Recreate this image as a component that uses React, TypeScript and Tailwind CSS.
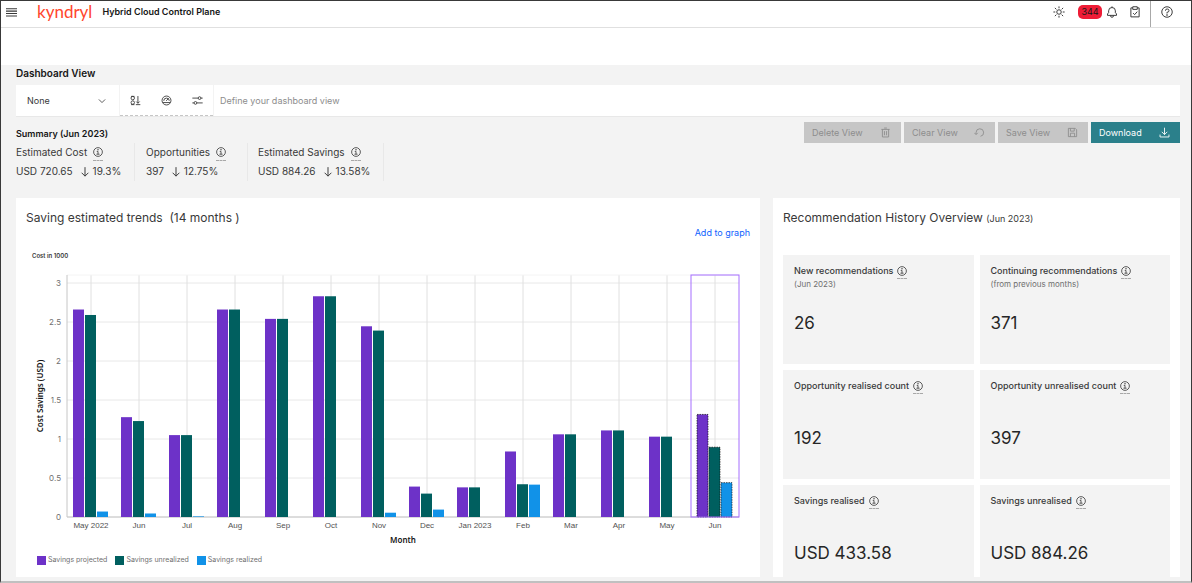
import type { ReactNode } from "react";

type IconProps = { className?: string; children: ReactNode };

// All icons share a 32-unit grid and inherit the text colour.
function Icon({ className = "size-[11px]", children }: IconProps) {
  return (
    <svg
      viewBox="0 0 32 32"
      className={className}
      fill="none"
      stroke="currentColor"
      strokeWidth="2.6"
      aria-hidden="true"
    >
      {children}
    </svg>
  );
}

function TrashIcon() {
  return (
    <Icon>
      <path d="M4 7h24M7 7v22h18V7M12 3h8M13 12v12M19 12v12" />
    </Icon>
  );
}

function ResetIcon() {
  return (
    <Icon>
      <path d="M19 27a11 11 0 1 0-13-11v5M1 17l5 5 5-5" />
    </Icon>
  );
}

function SaveIcon() {
  return (
    <Icon>
      <path d="M4 4h20l4 4v20H4zM10 4v8h11V4M10 28V18h12v10" />
    </Icon>
  );
}

function DownloadIcon() {
  return (
    <Icon>
      <path d="M16 2v20M8 14l8 8 8-8M3 22v7h26v-7" />
    </Icon>
  );
}

function DownArrow() {
  return (
    <Icon className="size-3 shrink-0">
      <path d="M16 3v24M7 18l9 9 9-9" />
    </Icon>
  );
}

// Info glyph with the dashed underline that marks it as having a tooltip.
function Info({ label }: { label: string }) {
  return (
    <button
      type="button"
      aria-label={`About ${label}`}
      className="flex h-4 shrink-0 items-center border-b border-dashed border-[#a8a8a8]"
    >
      <Icon className="size-[10px]">
        <circle cx="16" cy="16" r="14" />
        <path d="M12 14h4v9M11 23h10" />
        <circle cx="16" cy="9" r="1" fill="currentColor" />
      </Icon>
    </button>
  );
}

const summary = [
  { label: "Estimated Cost", value: "USD 720.65", change: "19.3%", box: "w-[119px]" },
  { label: "Opportunities", value: "397", change: "12.75%", box: "w-[113px] pl-[11px]" },
  { label: "Estimated Savings", value: "USD 884.26", change: "13.58%", box: "w-[136px] pl-[10px]" },
];

const actions = [
  { label: "Delete View", icon: <TrashIcon />, width: "w-[97px]" },
  { label: "Clear View", icon: <ResetIcon />, width: "w-[91px]" },
  { label: "Save View", icon: <SaveIcon />, width: "w-[90px]" },
];

const tiles = [
  { label: "New recommendations", note: "(Jun 2023)", value: "26" },
  { label: "Continuing recommendations", note: "(from previous months)", value: "371" },
  { label: "Opportunity realised count", note: "", value: "192" },
  { label: "Opportunity unrealised count", note: "", value: "397" },
  { label: "Savings realised", note: "", value: "USD 433.58" },
  { label: "Savings unrealised", note: "", value: "USD 884.26" },
];

const series = [
  { label: "Savings projected", color: "#6d32c8", swatch: "bg-[#6d32c8]" },
  { label: "Savings unrealized", color: "#005f5f", swatch: "bg-[#005f5f]" },
  { label: "Savings realized", color: "#1192e8", swatch: "bg-[#1192e8]" },
];

// [month, projected, unrealized, realized], in thousands
const months: [string, number, number, number][] = [
  ["May 2022", 2.66, 2.59, 0.07],
  ["Jun", 1.28, 1.23, 0.045],
  ["Jul", 1.05, 1.05, 0.008],
  ["Aug", 2.66, 2.66, 0],
  ["Sep", 2.54, 2.54, 0],
  ["Oct", 2.83, 2.83, 0],
  ["Nov", 2.445, 2.39, 0.055],
  ["Dec", 0.39, 0.3, 0.095],
  ["Jan 2023", 0.38, 0.38, 0],
  ["Feb", 0.84, 0.42, 0.415],
  ["Mar", 1.06, 1.06, 0],
  ["Apr", 1.11, 1.11, 0],
  ["May", 1.03, 1.03, 0],
  ["Jun", 1.315, 0.895, 0.44],
];

const ticks = [0, 0.5, 1, 1.5, 2, 2.5, 3];

const LEFT = 41;
const TOP = 12;
const BASE = 254;
const BAND = 48;
const UNIT = 78;
const RIGHT = LEFT + BAND * months.length;

function TrendChart() {
  return (
    <svg viewBox="0 0 724 288" className="block w-full" role="img" aria-label="Cost savings by month">
      {ticks.map((t) => (
        <g key={t}>
          <line x1={LEFT} x2={RIGHT} y1={BASE - t * UNIT} y2={BASE - t * UNIT} stroke="#e8e8e8" />
          <text x={LEFT - 6} y={BASE - t * UNIT + 3} textAnchor="end" className="fill-[#6f6f6f] text-[8px]">
            {t}
          </text>
        </g>
      ))}
      {months.map(([name], i) => {
        const x = LEFT + BAND * i + BAND / 2;
        return (
          <g key={i}>
            <line x1={x} x2={x} y1={TOP} y2={BASE} stroke="#e0e0e0" />
            <text
              x={x}
              y={BASE + 11}
              textAnchor="middle"
              className="fill-[#525252] font-['Liberation_Sans',sans-serif] text-[8px]"
            >
              {name}
            </text>
          </g>
        );
      })}
      <line x1={LEFT} x2={RIGHT} y1={TOP} y2={TOP} stroke="#f4f4f4" />
      <path d={`M${LEFT} ${TOP}V${BASE}H${RIGHT}`} fill="none" stroke="#c6c6c6" />
      {months.map(([, ...values], i) =>
        values.map((v, s) => (
          <rect
            key={`${i}-${s}`}
            x={LEFT + BAND * i + 6 + s * 12}
            y={BASE - v * UNIT}
            width="11"
            height={v * UNIT}
            fill={series[s].color}
            stroke={i === months.length - 1 ? "#161616" : "none"}
            strokeWidth="0.7"
            strokeDasharray="1.5 1"
          />
        )),
      )}
      {/* current month */}
      <rect x={RIGHT - BAND} y={TOP} width={BAND} height={BASE - TOP} fill="none" stroke="#a56eff" strokeWidth="1" />
      <text
        x="17"
        y="133"
        textAnchor="middle"
        transform="rotate(-90 17 133)"
        className="fill-[#161616] font-['Noto_Sans',sans-serif] text-[8px] font-semibold"
      >
        Cost Savings (USD)
      </text>
      <text
        x={(LEFT + RIGHT) / 2}
        y="280"
        textAnchor="middle"
        className="fill-[#161616] font-['Noto_Sans',sans-serif] text-[8px] font-semibold"
      >
        Month
      </text>
    </svg>
  );
}

function Header() {
  return (
    <header className="flex h-[27px] items-center border-b border-[#e0e0e0] bg-white pr-[18px] pb-1 pl-[5px] text-[#393939]">
      <button type="button" aria-label="Open menu">
        <Icon>
          <path d="M0 5h32M0 12h32M0 19h32M0 26h32" strokeWidth="3" />
        </Icon>
      </button>
      <a href="#" className="ml-[20px] flex items-center gap-[10px]">
        <span className="font-['Lato',sans-serif] text-[17px] leading-5 text-[#ff462d]">kyndryl</span>
        <span className="text-[9px] font-semibold text-[#161616]">Hybrid Cloud Control Plane</span>
      </a>
      <div className="ml-auto flex items-center">
        <button type="button" aria-label="Theme">
          <Icon className="size-3">
            <circle cx="16" cy="16" r="6" />
            <path d="M16 1v5M16 26v5M1 16h5M26 16h5M5 5l4 4M23 23l4 4M5 27l4-4M23 9l4-4" />
          </Icon>
        </button>
        <button type="button" aria-label="344 notifications" className="ml-[13px] flex items-center gap-1">
          <span className="flex h-[14px] w-6 items-center justify-center rounded-[5px] bg-[#ee1c36] text-[9px] text-[#161616]">
            344
          </span>
          <Icon className="size-3">
            <path d="M4 25v-4l3-3v-5a9 9 0 0 1 18 0v5l3 3v4zM16 1v3M12 25v1a4 4 0 0 0 8 0v-1" />
          </Icon>
        </button>
        <button type="button" aria-label="Tasks" className="mr-[9px] ml-[11px]">
          <Icon className="size-3">
            <path d="M10 5H5v24h22V5h-5M10 2h12v7H10zM11 19l4 4 7-8" />
          </Icon>
        </button>
        <div className="-mb-1 flex h-[26px] items-center border-l border-[#a8a8a8] pb-1 pl-[10px]">
          <button type="button" aria-label="Help">
            <Icon className="size-3">
              <circle cx="16" cy="16" r="14" />
              <path d="M12 13v-1a4 4 0 0 1 4-4h1a4 4 0 0 1 0 8.500h-1V20" />
              <circle cx="16" cy="24" r="1" fill="currentColor" />
            </Icon>
          </button>
        </div>
      </div>
    </header>
  );
}

function ViewBar() {
  return (
    <div className="mt-1 flex h-[31px] gap-px shadow-[0_1px_0_#e8e8e8]">
      <div className="relative w-[103px] bg-white">
        <select
          aria-label="Dashboard view"
          className="h-full w-full appearance-none bg-transparent pl-[11px] text-[9px] text-[#393939]"
        >
          <option>None</option>
        </select>
        <Icon className="pointer-events-none absolute top-[11px] right-3 size-[10px]">
          <path d="M6 11l10 10 10-10" />
        </Icon>
      </div>
      <div className="flex w-[93px] items-center justify-between border-b border-dashed border-[#c6c6c6] bg-white px-[10px]">
        <button type="button" aria-label="Sort">
          <Icon>
            <circle cx="8" cy="9" r="5" />
            <circle cx="8" cy="22" r="5" />
            <path d="M23 3v21M18 19l5 5 5-5M17 28h13M3 4h10M3 28h10" />
          </Icon>
        </button>
        <button type="button" aria-label="Gauge">
          <Icon>
            <circle cx="16" cy="16" r="13" />
            <path d="M8 17a8 8 0 0 1 16 0M15 17l7-7M5 22h22" />
          </Icon>
        </button>
        <button type="button" aria-label="Filters">
          <Icon>
            <path d="M1 9h17M26 9h5M1 23h5M14 23h17" />
            <circle cx="22" cy="9" r="4" />
            <circle cx="10" cy="23" r="4" />
          </Icon>
        </button>
      </div>
      <input
        aria-label="Define your dashboard view"
        placeholder="Define your dashboard view"
        className="min-w-0 flex-1 bg-white px-[6px] text-[9px] placeholder:text-[#8d8d8d]"
      />
    </div>
  );
}

function Summary() {
  return (
    <section className="mt-[6px] flex h-[76px] items-start justify-between">
      <div className="pt-1">
        <h2 className="text-[9px] leading-4 font-semibold text-[#161616]">Summary (Jun 2023)</h2>
        <div className="mt-px flex">
          {summary.map((s) => (
            <div key={s.label} className={`border-r border-[#e8e8e8] text-[10px] whitespace-nowrap ${s.box}`}>
              <div className="flex h-[19px] items-center gap-[6px]">
                {s.label}
                <Info label={s.label} />
              </div>
              <div className="flex h-[19px] items-center">
                {s.value}
                <span className="ml-[6px] flex items-center gap-[2px]">
                  <DownArrow />
                  {s.change}
                </span>
              </div>
            </div>
          ))}
        </div>
      </div>
      <div className="flex gap-[3px] text-[9px]">
        {actions.map((a) => (
          <button
            key={a.label}
            type="button"
            disabled
            className={`flex h-[21px] items-center justify-between bg-[#c6c6c6] pr-[10px] pl-2 text-[#8d8d8d] ${a.width}`}
          >
            {a.label}
            {a.icon}
          </button>
        ))}
        <button
          type="button"
          className="flex h-[21px] w-[89px] items-center justify-between bg-[#2b808b] pr-[10px] pl-2 text-white"
        >
          Download
          <DownloadIcon />
        </button>
      </div>
    </section>
  );
}

export default function App() {
  return (
    <div className="border border-b-2 border-[#393939] border-b-[#c0c0c0] bg-[#f3f3f3] font-['Inter',sans-serif] text-[#393939]">
      <Header />
      <div className="h-[37px] bg-white" />
      <main className="pr-[11px] pb-1 pl-[15px]">
        <h1 className="text-[10px] leading-4 font-semibold text-[#161616]">Dashboard View</h1>
        <ViewBar />
        <Summary />
        <div className="grid grid-cols-[744fr_407fr] gap-[13px]">
          <section className="bg-white px-[10px] pt-[10px]">
            <h2 className="text-[12px] leading-5 whitespace-pre">Saving estimated trends  (14 months )</h2>
            <div className="flex justify-end">
              <a href="#" className="text-[9px] leading-[10px] text-[#0f62fe]">
                Add to graph
              </a>
            </div>
            <p className="mt-[14px] ml-[6px] text-[6px] leading-2 font-semibold">Cost in 1000</p>
            <div className="pt-[3px]">
              <TrendChart />
            </div>
            <ul className="flex h-[19px] items-center gap-2 pl-[11px] text-[7px] text-[#6f6f6f]">
              {series.map((s) => (
                <li key={s.label} className="flex items-center gap-[2px]">
                  <span className={`size-[9px] ${s.swatch}`} />
                  {s.label}
                </li>
              ))}
            </ul>
          </section>
          <section className="bg-white px-[10px] pt-[10px]">
            <h2 className="text-[12px] leading-5">
              Recommendation History Overview <span className="text-[9px]">(Jun 2023)</span>
            </h2>
            <div className="mt-[26px] grid grid-cols-2 grid-rows-[109px_109px_92px] gap-[6px]">
              {tiles.map((t) => (
                <div key={t.label} className="bg-[#f3f3f3] px-[11px] pt-2">
                  <h3 className="flex h-4 items-center gap-1 text-[9px] font-medium whitespace-nowrap text-[#393939]">
                    {t.label}
                    <Info label={t.label} />
                  </h3>
                  <p className="h-8 text-[8px] leading-[10px] text-[#6f6f6f]">{t.note}</p>
                  <p className="text-[17px] leading-6 text-[#262626]">{t.value}</p>
                </div>
              ))}
            </div>
          </section>
        </div>
      </main>
    </div>
  );
}
